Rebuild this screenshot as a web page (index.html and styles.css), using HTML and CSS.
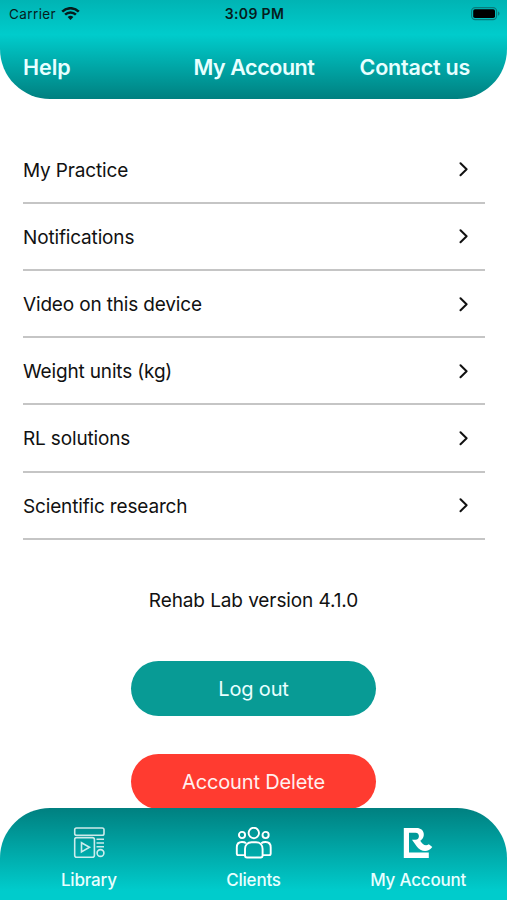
FILE: index.html
```html
<!DOCTYPE html>
<html lang="en">
<head>
<meta charset="utf-8">
<title>My Account</title>
<link rel="stylesheet" href="styles.css">
</head>
<body>
<div class="screen">
  <header class="header">
    <div class="status">
      <div class="carrier"><span>Carrier</span>
        <svg width="19" height="14" viewBox="0 0 19 14" fill="none" stroke="#061c1c" stroke-width="2.5"><path d="M1.2 4.6a11.8 11.8 0 0 1 16.6 0M4.1 7.7a7.6 7.6 0 0 1 10.8 0"/><path d="M9.5 13 6.6 10.1a4.1 4.1 0 0 1 5.8 0z" fill="#061c1c" stroke="none"/></svg>
      </div>
      <time class="clock">3:09 PM</time>
      <svg class="battery" width="29" height="14" viewBox="0 0 29 14"><rect x=".6" y=".6" width="25" height="12" rx="3.6" fill="none" stroke="#087c7c" stroke-width="1.1"/><rect x="2.2" y="2.2" width="21.8" height="8.8" rx="1.8"/><path d="M27 4.6c2 .7 2 3.5 0 4.2z" fill="#087c7c"/></svg>
    </div>
    <nav class="topnav">
      <a class="help">Help</a>
      <h1 class="title">My Account</h1>
      <a class="contact">Contact us</a>
    </nav>
  </header>
  <main class="content">
    <ul class="menu">
      <li class="row"><span>My Practice</span><svg class="chevron" viewBox="0 0 10 16"><path d="m1.5 1.2 6.1 6-6.1 6"/></svg></li>
      <li class="row"><span>Notifications</span><svg class="chevron" viewBox="0 0 10 16"><path d="m1.5 1.2 6.1 6-6.1 6"/></svg></li>
      <li class="row"><span>Video on this device</span><svg class="chevron" viewBox="0 0 10 16"><path d="m1.5 1.2 6.1 6-6.1 6"/></svg></li>
      <li class="row"><span>Weight units (kg)</span><svg class="chevron" viewBox="0 0 10 16"><path d="m1.5 1.2 6.1 6-6.1 6"/></svg></li>
      <li class="row"><span>RL solutions</span><svg class="chevron" viewBox="0 0 10 16"><path d="m1.5 1.2 6.1 6-6.1 6"/></svg></li>
      <li class="row"><span>Scientific research</span><svg class="chevron" viewBox="0 0 10 16"><path d="m1.5 1.2 6.1 6-6.1 6"/></svg></li>
    </ul>
    <p class="version">Rehab Lab version 4.1.0</p>
    <button class="button logout">Log out</button>
    <button class="button delete">Account Delete</button>
  </main>
  <footer class="tabs">
    <a class="tab">
      <svg class="soft" width="32" height="32" viewBox="0 0 32 32" fill="none" stroke="#fff" stroke-width="1.6"><rect x="1.7" y="1" width="29.3" height="7.2" rx="1.8"/><rect x="1.7" y="10.6" width="19.7" height="19.7" rx="2"/><path d="m8.5 15.7 8 4.6-8 4.6zM23.5 12.3H31M23.5 16H31M23.5 19.7H31"/><circle cx="27.5" cy="26" r="3.4"/></svg>
      <span>Library</span>
    </a>
    <a class="tab">
      <svg width="38" height="32" viewBox="0 0 38 32" fill="none" stroke="#fff" stroke-width="1.9"><circle cx="19.8" cy="6" r="5.2"/><circle cx="8" cy="8" r="3.1"/><circle cx="31.6" cy="8" r="3.1"/><path d="M11 28.5V22c0-4 2.6-6.8 6.6-6.8h4.4c4 0 6.6 2.8 6.6 6.8v6.5q0 2-2 2H13q-2 0-2-2zM12 16.2C11 15.3 9.6 15 8 15c-3.4 0-5.2 2-5.2 5.5v6q0 1.6 1.6 1.6H11M27.4 16.2c1-.9 2.5-1.2 4.1-1.2 3.4 0 5.2 2 5.2 5.5v6q0 1.6-1.6 1.6h-6.5"/></svg>
      <span>Clients</span>
    </a>
    <a class="tab">
      <svg width="32" height="32" viewBox="0 0 32 32" fill="#fff"><path fill-rule="evenodd" d="M1.8 1h12.7c8.7 0 9.4 9.7 3.7 12.8 2.3 3.8 5.5 5.8 8.6 3.4l3.5 2.8c-4.3 6.2-12 4.6-15.7-.8L10 12.8h3.5c4.6 0 4.6-7.1 0-7.1H7v19.9h19.8V31h-25z"/></svg>
      <span>My Account</span>
    </a>
  </footer>
</div>
</body>
</html>
```
FILE: styles.css
```css
* { box-sizing: border-box; }
body { margin: 0; background: #fff; color: #111; font-family: Inter, "Liberation Sans", sans-serif; }
.screen { height: 900px; display: flex; flex-direction: column; overflow: hidden; }
.header { height: 99px; flex: none; border-radius: 0 0 50px 50px; background: linear-gradient(#00b4b4 0, #00cccc 35%, #008080 100%); color: #e8ffff; }
.status { height: 27px; padding: 0 7px 0 9px; display: grid; grid-template-columns: 1fr auto 1fr; align-items: center; color: #061c1c; font-size: 13.5px; }
.carrier { display: flex; align-items: center; gap: 5px; letter-spacing: .4px; }
.clock { font-weight: 600; font-size: 14px; letter-spacing: .35px; }
.battery { justify-self: end; }
.topnav { height: 80px; padding: 0 37px 0 23px; display: grid; grid-template-columns: 170.5px 166px 1fr; align-items: center; font-size: 21.5px; font-weight: 600; }
.title { margin: 0; font-size: inherit; font-weight: inherit; letter-spacing: -.45px; }
.contact { letter-spacing: -.2px; }
.topnav a, .title { white-space: nowrap; }
.content { flex: 1; min-height: 0; display: flex; flex-direction: column; align-items: center; padding: 37.6px 0 0; }
.menu { list-style: none; margin: 0; padding: 0; width: 462px; }
.row { height: 67.2px; border-bottom: 2px solid #c5c5c5; padding: 2px 16px 0 0; display: flex; justify-content: space-between; align-items: center; font-size: 19px; letter-spacing: -.16px; }
.row span { padding-left: .5px; }
.chevron { width: 10px; height: 16px; fill: none; stroke: #111; stroke-width: 2; stroke-linecap: round; stroke-linejoin: round; }
.version { margin: 46.4px 0 0; font-size: 19px; line-height: 30px; letter-spacing: -.1px; }
.button { width: 245px; height: 55px; flex: none; border: 0; border-radius: 28px; color: #e8ffff; font: 20px Inter, "Liberation Sans", sans-serif; letter-spacing: -.15px; padding-top: 2px; }
.logout { margin-top: 44.4px; background: #089b95; }
.delete { margin-top: 38px; background: #ff3b30; color: #fff0ef; }
.tabs { height: 92px; flex: none; border-radius: 50px 50px 0 0; background: linear-gradient(#008080 0, #00cccc 90%, #00cccc 100%); color: #e8ffff; padding: 19px 6.5px 0; display: grid; grid-template-columns: repeat(3, 1fr); font-size: 17px; font-weight: 500; letter-spacing: -.2px; }
.tab { display: flex; flex-direction: column; align-items: center; gap: 11px; line-height: 21px; }
.soft { opacity: .8; }
```
